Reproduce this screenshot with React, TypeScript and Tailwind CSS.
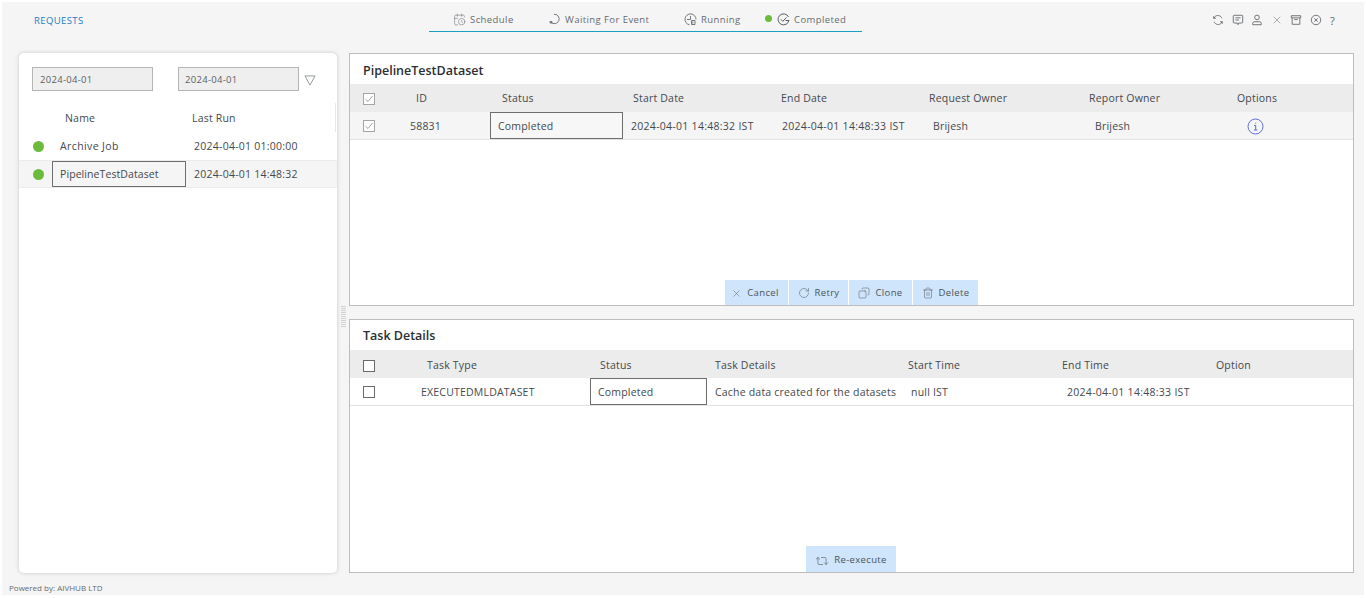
import React from "react";
import { CalendarClock, Copy, Repeat2, RotateCw, Trash2, X } from "lucide-react";

const font = "font-['Open_Sans','Noto_Sans',sans-serif]";

function TopIcons() {
  return (
    <div className="flex items-center gap-[7.5px] text-[#5f6468] mr-[27px]">
      <svg width="12" height="12" viewBox="0 0 14 14" fill="none" stroke="currentColor" strokeWidth="1">
        <path d="M11.5 5A5 5 0 0 0 3 3.5L2 5M2.5 9A5 5 0 0 0 11 10.5L12 9" />
        <path d="M2 2.5V5h2.5M12 11.500V9H9.500" />
      </svg>
      <svg width="12" height="12" viewBox="0 0 14 14" fill="none" stroke="currentColor" strokeWidth="1">
        <path d="M2.500 1.500h9a1 1 0 0 1 1 1v7a1 1 0 0 1-1 1H8l-1 2-1-2H2.500a1 1 0 0 1-1-1v-7a1 1 0 0 1 1-1z" />
        <path d="M4 4.500h6M4 7h4" />
      </svg>
      <svg width="12" height="12" viewBox="0 0 14 14" fill="none" stroke="currentColor" strokeWidth="1">
        <circle cx="7" cy="4" r="2.700" />
        <path d="M2 12.500v-1.500a2 2 0 0 1 2-2h6a2 2 0 0 1 2 2v1.500z" />
      </svg>
      <X size={12} strokeWidth={1} />
      <svg width="12" height="12" viewBox="0 0 14 14" fill="none" stroke="currentColor" strokeWidth="1">
        <path d="M1.500 2h11v2.500h-11zM2.500 4.500v7.500h9V4.500M5 6.500h4" />
      </svg>
      <svg width="12" height="12" viewBox="0 0 14 14" fill="none" stroke="currentColor" strokeWidth="1">
        <circle cx="7" cy="7" r="5.500" />
        <path d="M5 5l4 4M9 5l-4 4" />
      </svg>
      <span className="text-[11px] leading-none w-[6px] ml-[1px]">?</span>
    </div>
  );
}

function Tab({ icon, label, className, dot }: { icon: React.ReactNode; label: string; className: string; dot?: boolean }) {
  return (
    <div className={`flex items-center text-[9.5px] tracking-[0.42px] text-[#666b70] ${className}`}>
      {dot && <span className="w-[7px] h-[7px] rounded-full bg-[#6cbb3c] mr-[5px] -mt-[2px]" />}
      {icon}
      <span className="ml-[4px] pt-[1px]">{label}</span>
    </div>
  );
}

function Checkbox({ checked, dark }: { checked?: boolean; dark?: boolean }) {
  return (
    <span className={`flex items-center justify-center w-[12px] h-[12px] border ${dark ? "border-[#6a6a6a]" : "border-[#a5a5a5]"} bg-white`}>
      {checked && (
        <svg width="10" height="10" viewBox="0 0 10 10" fill="none" stroke="#8c8c8c" strokeWidth="0.8">
          <path d="M1.500 5.200 4 7.500 8.500 2" />
        </svg>
      )}
    </span>
  );
}

function ActionButton({ icon, label, size }: { icon: React.ReactNode; label: string; size: string }) {
  return (
    <div className={`flex items-center justify-center gap-[5px] pt-[1px] bg-[#cfe5fb] text-[9.500px] tracking-[0.35px] text-[#4d5358] ${size}`}>
      {icon}
      {label}
    </div>
  );
}

function JobRow({ name, lastRun, selected }: { name: string; lastRun: string; selected?: boolean }) {
  return (
    <div className={`grid grid-cols-[33px_134px_1fr] items-center h-[28px] ${selected ? "bg-[#f5f5f5] border-y border-[#ebebeb]" : ""}`}>
      <span className="w-[11px] h-[11px] rounded-full bg-[#6cbb3c] ml-[14px]" />
      <div className={`h-[26px] flex items-center pt-[2px] pl-[7px] ${selected ? "border border-[#6e6e6e] tracking-[0.08px]" : "tracking-[0.4px] pl-[8px]"}`}>{name}</div>
      <div className="pl-[8px] pt-[2px] tracking-[0.25px]">{lastRun}</div>
    </div>
  );
}

function InfoIcon() {
  return (
    <svg width="17" height="17" viewBox="0 0 17 17" fill="none" stroke="#5c6fd6" strokeWidth="1">
      <circle cx="8.500" cy="8.500" r="7.500" />
      <path d="M7 7.500h1.700v4.500M6.800 12h3.500" />
      <path d="M8.200 4.800h1v1h-1z" fill="#5c6fd6" stroke="none" />
    </svg>
  );
}

export default function App() {
  return (
    <div className={`${font} w-full h-[598px] overflow-hidden bg-white pt-[2px] px-[2px] pb-[3px] text-[10.500px] text-[#44494d]`}>
      <div className="h-full bg-[#f5f5f5] flex flex-col">
        {/* Top bar */}
        <header className="h-[31px] shrink-0 flex items-start pl-[32px] pr-[1px]">
          <span className="w-[395px] mt-[12px] text-[9.500px] leading-[13px] font-medium tracking-[0.4px] text-[#1b7fc4]">REQUESTS</span>
          <div className="w-[433px] h-[30px] flex flex-col">
            <nav className="flex-1 flex items-end pb-[4px]">
              <Tab className="ml-[24px] w-[96px]" label="Schedule" icon={<CalendarClock size={13} strokeWidth={1} />} />
              <Tab
                className="w-[135px]"
                label="Waiting For Event"
                icon={
                  <svg width="12" height="12" viewBox="0 0 12 12" fill="none" stroke="currentColor" strokeWidth="0.9">
                    <path d="M5 1.300A4.700 4.700 0 1 1 2 9.200" />
                    <path d="M1 8.500h2v1.500H1z" />
                  </svg>
                }
              />
              <Tab
                className="w-[81px]"
                label="Running"
                icon={
                  <svg width="13" height="13" viewBox="0 0 13 13" fill="none" stroke="currentColor" strokeWidth="0.9">
                    <path d="M5.500 11.800A5.500 5.500 0 1 1 12 6.500" />
                    <path d="M6.500 3v3.500H3M7.500 7.500h3.500v4h-3.500zM8.800 8.500v2" />
                  </svg>
                }
              />
              <Tab
                dot
                className=""
                label="Completed"
                icon={
                  <svg width="13" height="13" viewBox="0 0 13 13" fill="none" stroke="#4a4f54" strokeWidth="0.9">
                    <path d="M11.500 4A5.500 5.500 0 1 0 12 7" />
                    <path d="M3.800 6.300 5.800 8.300 9.500 4.500M8.500 7.500H12" />
                  </svg>
                }
              />
            </nav>
            <div className="h-px shrink-0 bg-[#1aa0c2]" />
          </div>
          <div className="flex-1 h-[29px] pt-[7px] flex items-center justify-end">
            <TopIcons />
          </div>
        </header>

        {/* Main area */}
        <main className="flex-1 min-h-0 flex pt-[20px] pl-[17px] pr-[10px] pb-[22px]">
          <section className="w-[318px] shrink-0 bg-white rounded-[5px] shadow-[0_0_4px_rgba(0,0,0,0.18)] flex flex-col relative">
            <div className="flex items-center pt-[14px] pl-[13px]">
              <div className="w-[121px] h-[24px] bg-[#efefef] border border-[#b5b5b5] flex items-center pt-[2px] pl-[7px] text-[9.500px] tracking-[0.3px] text-[#5b6065]">2024-04-01</div>
              <div className="w-[121px] h-[24px] ml-[25px] bg-[#efefef] border border-[#b5b5b5] flex items-center pt-[2px] pl-[6px] text-[9.500px] tracking-[0.3px] text-[#5b6065]">2024-04-01</div>
              <svg className="ml-[5px] mt-[2px]" width="12" height="11" viewBox="0 0 13 12" fill="none" stroke="#808589" strokeWidth="0.9">
                <path d="M1 1h11L6.500 11z" />
              </svg>
            </div>
            <div className="grid grid-cols-[173px_1fr] h-[28px] mt-[13px] pt-[1px] items-center tracking-[0.2px]">
              <span className="pl-[46px]">Name</span>
              <span>Last Run</span>
            </div>
            <div>
              <JobRow name="Archive Job" lastRun="2024-04-01 01:00:00" />
              <JobRow name="PipelineTestDataset" lastRun="2024-04-01 14:48:32" selected />
            </div>
            <span className="absolute right-[1px] top-[50px] w-px h-[29px] bg-[#e8e8e8]" />
          </section>

          {/* Splitter */}
          <div className="w-[12px] shrink-0 flex items-center justify-center">
            <div className="w-[5px] h-[22px] mt-[6px] bg-[repeating-linear-gradient(0deg,#d2d2d2_0_1px,transparent_1px_2px)]" />
          </div>

          <div className="flex-1 min-w-0 flex flex-col gap-[13px]">
            <section className="h-[253px] shrink-0 bg-white border border-[#bdbdbd] flex flex-col">
              <h2 className="h-[30px] shrink-0 flex items-center pt-[4px] pl-[13px] text-[12.500px] font-semibold text-[#2b2f33]">PipelineTestDataset</h2>
              <div className="grid grid-cols-[50px_90px_133px_150px_148px_160px_148px_1fr] h-[28px] shrink-0 items-center bg-[#ececec] tracking-[0.2px] [&>span]:pt-[2px]">
                <span className="pl-[13px]"><Checkbox checked /></span>
                <span className="pl-[16px]">ID</span>
                <span className="pl-[12px]">Status</span>
                <span className="pl-[10px]">Start Date</span>
                <span className="pl-[8px]">End Date</span>
                <span className="pl-[8px]">Request Owner</span>
                <span className="pl-[8px]">Report Owner</span>
                <span className="pl-[8px]">Options</span>
              </div>
              <div className="grid grid-cols-[50px_90px_133px_150px_148px_160px_148px_1fr] h-[28px] shrink-0 items-center bg-[#f5f5f5] border-b border-[#e2e2e2] tracking-[0.2px] [&>span]:pt-[2px]">
                <span className="pl-[13px] -mt-[2px]"><Checkbox checked /></span>
                <span className="pl-[10px]">58831</span>
                <span className="h-[27px] flex items-center pl-[7px] border border-[#6e6e6e] bg-[#f7f7f7]">Completed</span>
                <span className="pl-[8px] whitespace-nowrap tracking-[0.28px]">2024-04-01 14:48:32 IST</span>
                <span className="pl-[9px] whitespace-nowrap tracking-[0.28px]">2024-04-01 14:48:33 IST</span>
                <span className="pl-[12px]">Brijesh</span>
                <span className="pl-[14px]">Brijesh</span>
                <span className="pl-[18px]"><InfoIcon /></span>
              </div>
              <div className="flex-1" />
              <div className="flex justify-center gap-[1px]">
                <ActionButton size="w-[63px] h-[25px] pr-[3px]" label="Cancel" icon={<X size={11} strokeWidth={1} />} />
                <ActionButton size="w-[59px] h-[25px]" label="Retry" icon={<RotateCw size={12} strokeWidth={1} />} />
                <ActionButton size="w-[63px] h-[25px]" label="Clone" icon={<Copy size={12} strokeWidth={1} className="-scale-x-100" />} />
                <ActionButton size="w-[65px] h-[25px]" label="Delete" icon={<Trash2 size={12} strokeWidth={1} />} />
              </div>
            </section>

            <section className="flex-1 min-h-0 bg-white border border-[#bdbdbd] flex flex-col">
              <h2 className="h-[30px] shrink-0 flex items-center pt-[3px] pl-[13px] text-[12.500px] font-semibold text-[#2b2f33]">Task Details</h2>
              <div className="grid grid-cols-[71px_169px_116px_193px_154px_154px_1fr] h-[28px] shrink-0 items-center bg-[#ececec] tracking-[0.2px] [&>span]:pt-[3px]">
                <span className="pl-[13px]"><Checkbox dark /></span>
                <span className="pl-[6px]">Task Type</span>
                <span className="pl-[10px]">Status</span>
                <span className="pl-[9px]">Task Details</span>
                <span className="pl-[9px]">Start Time</span>
                <span className="pl-[9px]">End Time</span>
                <span className="pl-[9px]">Option</span>
              </div>
              <div className="grid grid-cols-[71px_169px_117px_191px_156px_1fr] h-[28px] shrink-0 items-center border-b border-[#e2e2e2] tracking-[0.2px] [&>span]:pt-[2px]">
                <span className="pl-[13px] -mt-[2px]"><Checkbox dark /></span>
                <span className="whitespace-nowrap">EXECUTEDMLDATASET</span>
                <span className="h-[27px] flex items-center pl-[7px] border border-[#6e6e6e]">Completed</span>
                <span className="pl-[8px] whitespace-nowrap">Cache data created for the datasets</span>
                <span className="pl-[13px]">null IST</span>
                <span className="pl-[13px] whitespace-nowrap tracking-[0.28px]">2024-04-01 14:48:33 IST</span>
              </div>
              <div className="flex-1" />
              <div className="flex justify-center pr-[1px]">
                <ActionButton size="w-[90px] h-[26px] pt-[3px]" label="Re-execute" icon={<Repeat2 size={14} strokeWidth={1} />} />
              </div>
            </section>
          </div>
        </main>

        <footer className="h-[0px] relative">
          <span className="absolute left-[7px] -top-[13px] text-[8px] leading-[12px] text-[#666b70]">Powered by: AIVHUB LTD</span>
        </footer>
      </div>
    </div>
  );
}
